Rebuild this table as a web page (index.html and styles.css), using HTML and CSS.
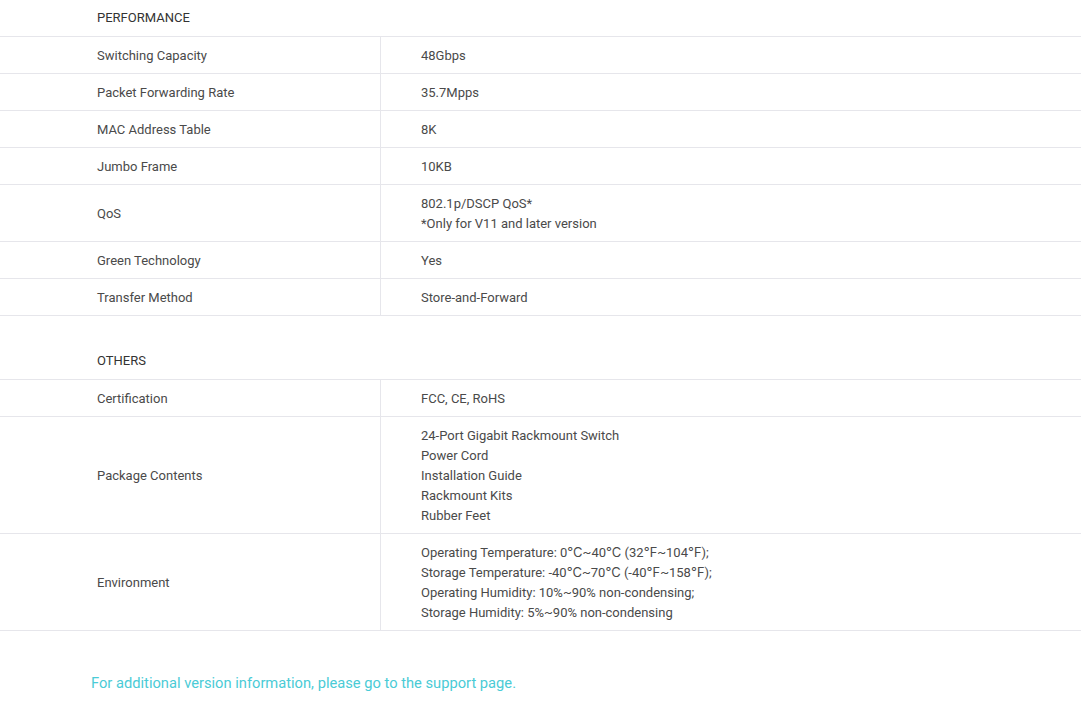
FILE: index.html
```html
<!DOCTYPE html>
<html lang="en">
<head>
  <meta charset="UTF-8">
  <title>Specifications</title>
  <link rel="stylesheet" href="styles.css">
</head>
<body>
  <div class="specs">
    <div class="secao">
      <h3>PERFORMANCE</h3>
      <table>
        <tr><td class="nome">Switching Capacity</td><td class="valor">48Gbps</td></tr>
        <tr><td class="nome">Packet Forwarding Rate</td><td class="valor">35.7Mpps</td></tr>
        <tr><td class="nome">MAC Address Table</td><td class="valor">8K</td></tr>
        <tr><td class="nome">Jumbo Frame</td><td class="valor">10KB</td></tr>
        <tr><td class="nome">QoS</td><td class="valor">802.1p/DSCP QoS*<br>*Only for V11 and later version</td></tr>
        <tr><td class="nome">Green Technology</td><td class="valor">Yes</td></tr>
        <tr><td class="nome">Transfer Method</td><td class="valor">Store-and-Forward</td></tr>
      </table>
    </div>

    <div class="secao">
      <h3>OTHERS</h3>
      <table>
        <tr><td class="nome">Certification</td><td class="valor">FCC, CE, RoHS</td></tr>
        <tr><td class="nome">Package Contents</td><td class="valor">24-Port Gigabit Rackmount Switch<br>Power Cord<br>Installation Guide<br>Rackmount Kits<br>Rubber Feet</td></tr>
        <tr><td class="nome">Environment</td><td class="valor">Operating Temperature: 0℃~40℃ (32℉~104℉);<br>Storage Temperature: -40℃~70℃ (-40℉~158℉);<br>Operating Humidity: 10%~90% non-condensing;<br>Storage Humidity: 5%~90% non-condensing</td></tr>
      </table>
    </div>
  </div>

  <p class="nota"><a href="#">For additional version information, please go to the support page.</a></p>
</body>
</html>
```

FILE: styles.css
```css
body {
  margin: 0;
  background-color: #fff;
  color: #4a4a4a;
  font-family: 'Roboto', 'Inter', sans-serif;
  font-size: 13px;
  line-height: 20px;
}

.specs {
  width: 1081px;
}

.secao + .secao {
  margin-top: 27px;
}

.secao h3 {
  margin: 0;
  padding: 8px 0 8px 97px;
  font-size: 13px;
  font-weight: normal;
  color: #333;
}

table {
  width: 100%;
  border-collapse: collapse;
  border-top: 1px solid #e6e6eb;
}

td {
  padding: 9px 0 7px;
  border-bottom: 1px solid #e6e6eb;
  vertical-align: middle;
}

td.nome {
  width: 283px;
  padding-left: 97px;
  border-right: 1px solid #e6e6eb;
}

td.valor {
  padding-left: 40px;
}

.nota {
  margin: 42px 0 0 91px;
  font-size: 14.7px;
}

.nota a {
  color: #4acbd6;
  text-decoration: none;
}
```
